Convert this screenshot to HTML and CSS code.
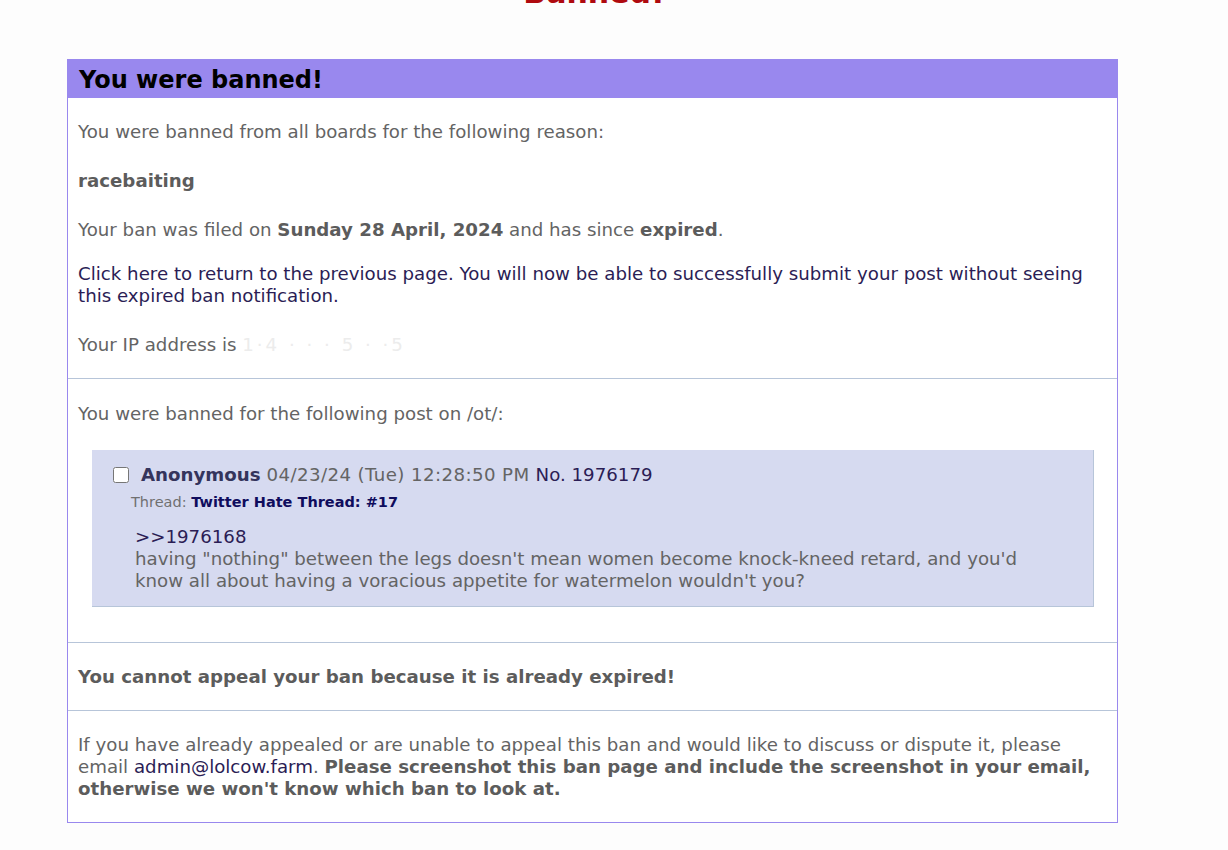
FILE: index.html
```html
<!DOCTYPE html>
<html lang="en">
<head>
  <meta charset="UTF-8" />
  <meta name="viewport" content="width=device-width, initial-scale=1.0"/>
  <title>Banned!</title>
  <link rel="stylesheet" href="styles.css">
</head>
<body>

  <h1 class="page-title">Banned!</h1>

  <div class="ban">
    <h2 class="ban-head">You were banned!</h2>

    <div class="ban-section first">
      <p>You were banned from all boards for the following reason:</p>
      <p><b>racebaiting</b></p>
      <p>Your ban was filed on <b>Sunday 28 April, 2024</b> and has since <b>expired</b>.</p>
      <p class="return"><a href="#">Click here to return to the previous page. You will now be able to successfully submit your post without seeing this expired ban notification.</a></p>
      <p>Your IP address is <span class="ip">1·4 · · · 5 · ·5</span></p>
    </div>

    <div class="ban-section post-section">
      <p>You were banned for the following post on <span>/ot/</span>:</p>
      <div class="post">
        <div class="post-info">
          <input type="checkbox" class="post-check">
          <span class="name">Anonymous</span>
          <span class="date">04/23/24 (Tue) 12:28:50 PM</span>
          <a href="#" class="post-no">No. 1976179</a>
        </div>
        <div class="thread">Thread: <a href="#">Twitter Hate Thread: #17</a></div>
        <div class="post-body">
          <a href="#" class="quote">&gt;&gt;1976168</a><br>
          having "nothing" between the legs doesn't mean women become knock-kneed retard, and you'd know all about having a voracious appetite for watermelon wouldn't you?
        </div>
      </div>
    </div>

    <div class="ban-section">
      <p><b>You cannot appeal your ban because it is already expired!</b></p>
    </div>

    <div class="ban-section">
      <p>If you have already appealed or are unable to appeal this ban and would like to discuss or dispute it, please email <a href="#">admin@lolcow.farm</a>. <b>Please screenshot this ban page and include the screenshot in your email, otherwise we won't know which ban to look at.</b></p>
    </div>
  </div>

</body>
</html>
```

FILE: styles.css
```css
body {
  margin: 0;
  padding: 0;
  background-color: #fdfdfd;
  color: #646464;
  font-family: "DejaVu Sans", Verdana, sans-serif;
  font-size: 18.2px;
  overflow: hidden;
}

a {
  color: #2b1d55;
  text-decoration: none;
}

.page-title {
  margin: -25px 0 0;
  height: 36px;
  line-height: 36px;
  padding-right: 40px;
  text-align: center;
  color: #af0a0f;
  font-size: 30px;
  font-weight: bold;
}

.ban {
  width: 1049px;
  margin: 48px 0 0 67px;
  background: #fff;
  border: 1px solid #9988ee;
}

.ban-head {
  margin: 0;
  height: 38px;
  line-height: 40px;
  padding: 0 11px;
  background: #9988ee;
  color: #000;
  font-size: 24px;
}

.ban-section {
  padding: 23px 10px 22px;
  border-top: 1px solid #b7c5d9;
}

.ban-section.first {
  border-top: none;
}

.ban-section.post-section {
  padding-top: 24px;
}

.ban-section p {
  margin: 0;
  line-height: 22px;
}

.ban-section p + p {
  margin-top: 27px;
}

.ban-section p.return {
  margin-top: 22px;
}

.ban-section b {
  color: #5c5c5c;
}

.ip {
  color: #ececec;
  letter-spacing: 3px;
}

.post {
  margin: 25px 13px 13px 14px;
  padding: 14px 30px 14px 20px;
  background: #d6daf0;
  border-right: 1px solid #b7c5d9;
  border-bottom: 1px solid #b7c5d9;
}

.post-info {
  display: flex;
  align-items: center;
  gap: 6px;
  line-height: 22px;
}

.post-check {
  width: 16px;
  height: 16px;
  margin: 0 6px 0 1px;
}

.name {
  color: #34345c;
  font-weight: bold;
}

.date {
  letter-spacing: 0.4px;
}

.post-no {
  color: #2b1d55;
}

.thread {
  margin: 7px 0 0 19px;
  font-size: 14.5px;
  line-height: 18px;
  color: #707070;
}

.thread a {
  color: #0f0c5d;
  font-weight: bold;
}

.post-body {
  margin: 15px 0 0 23px;
  line-height: 22px;
}

.quote {
  color: #2b1d55;
}
```
